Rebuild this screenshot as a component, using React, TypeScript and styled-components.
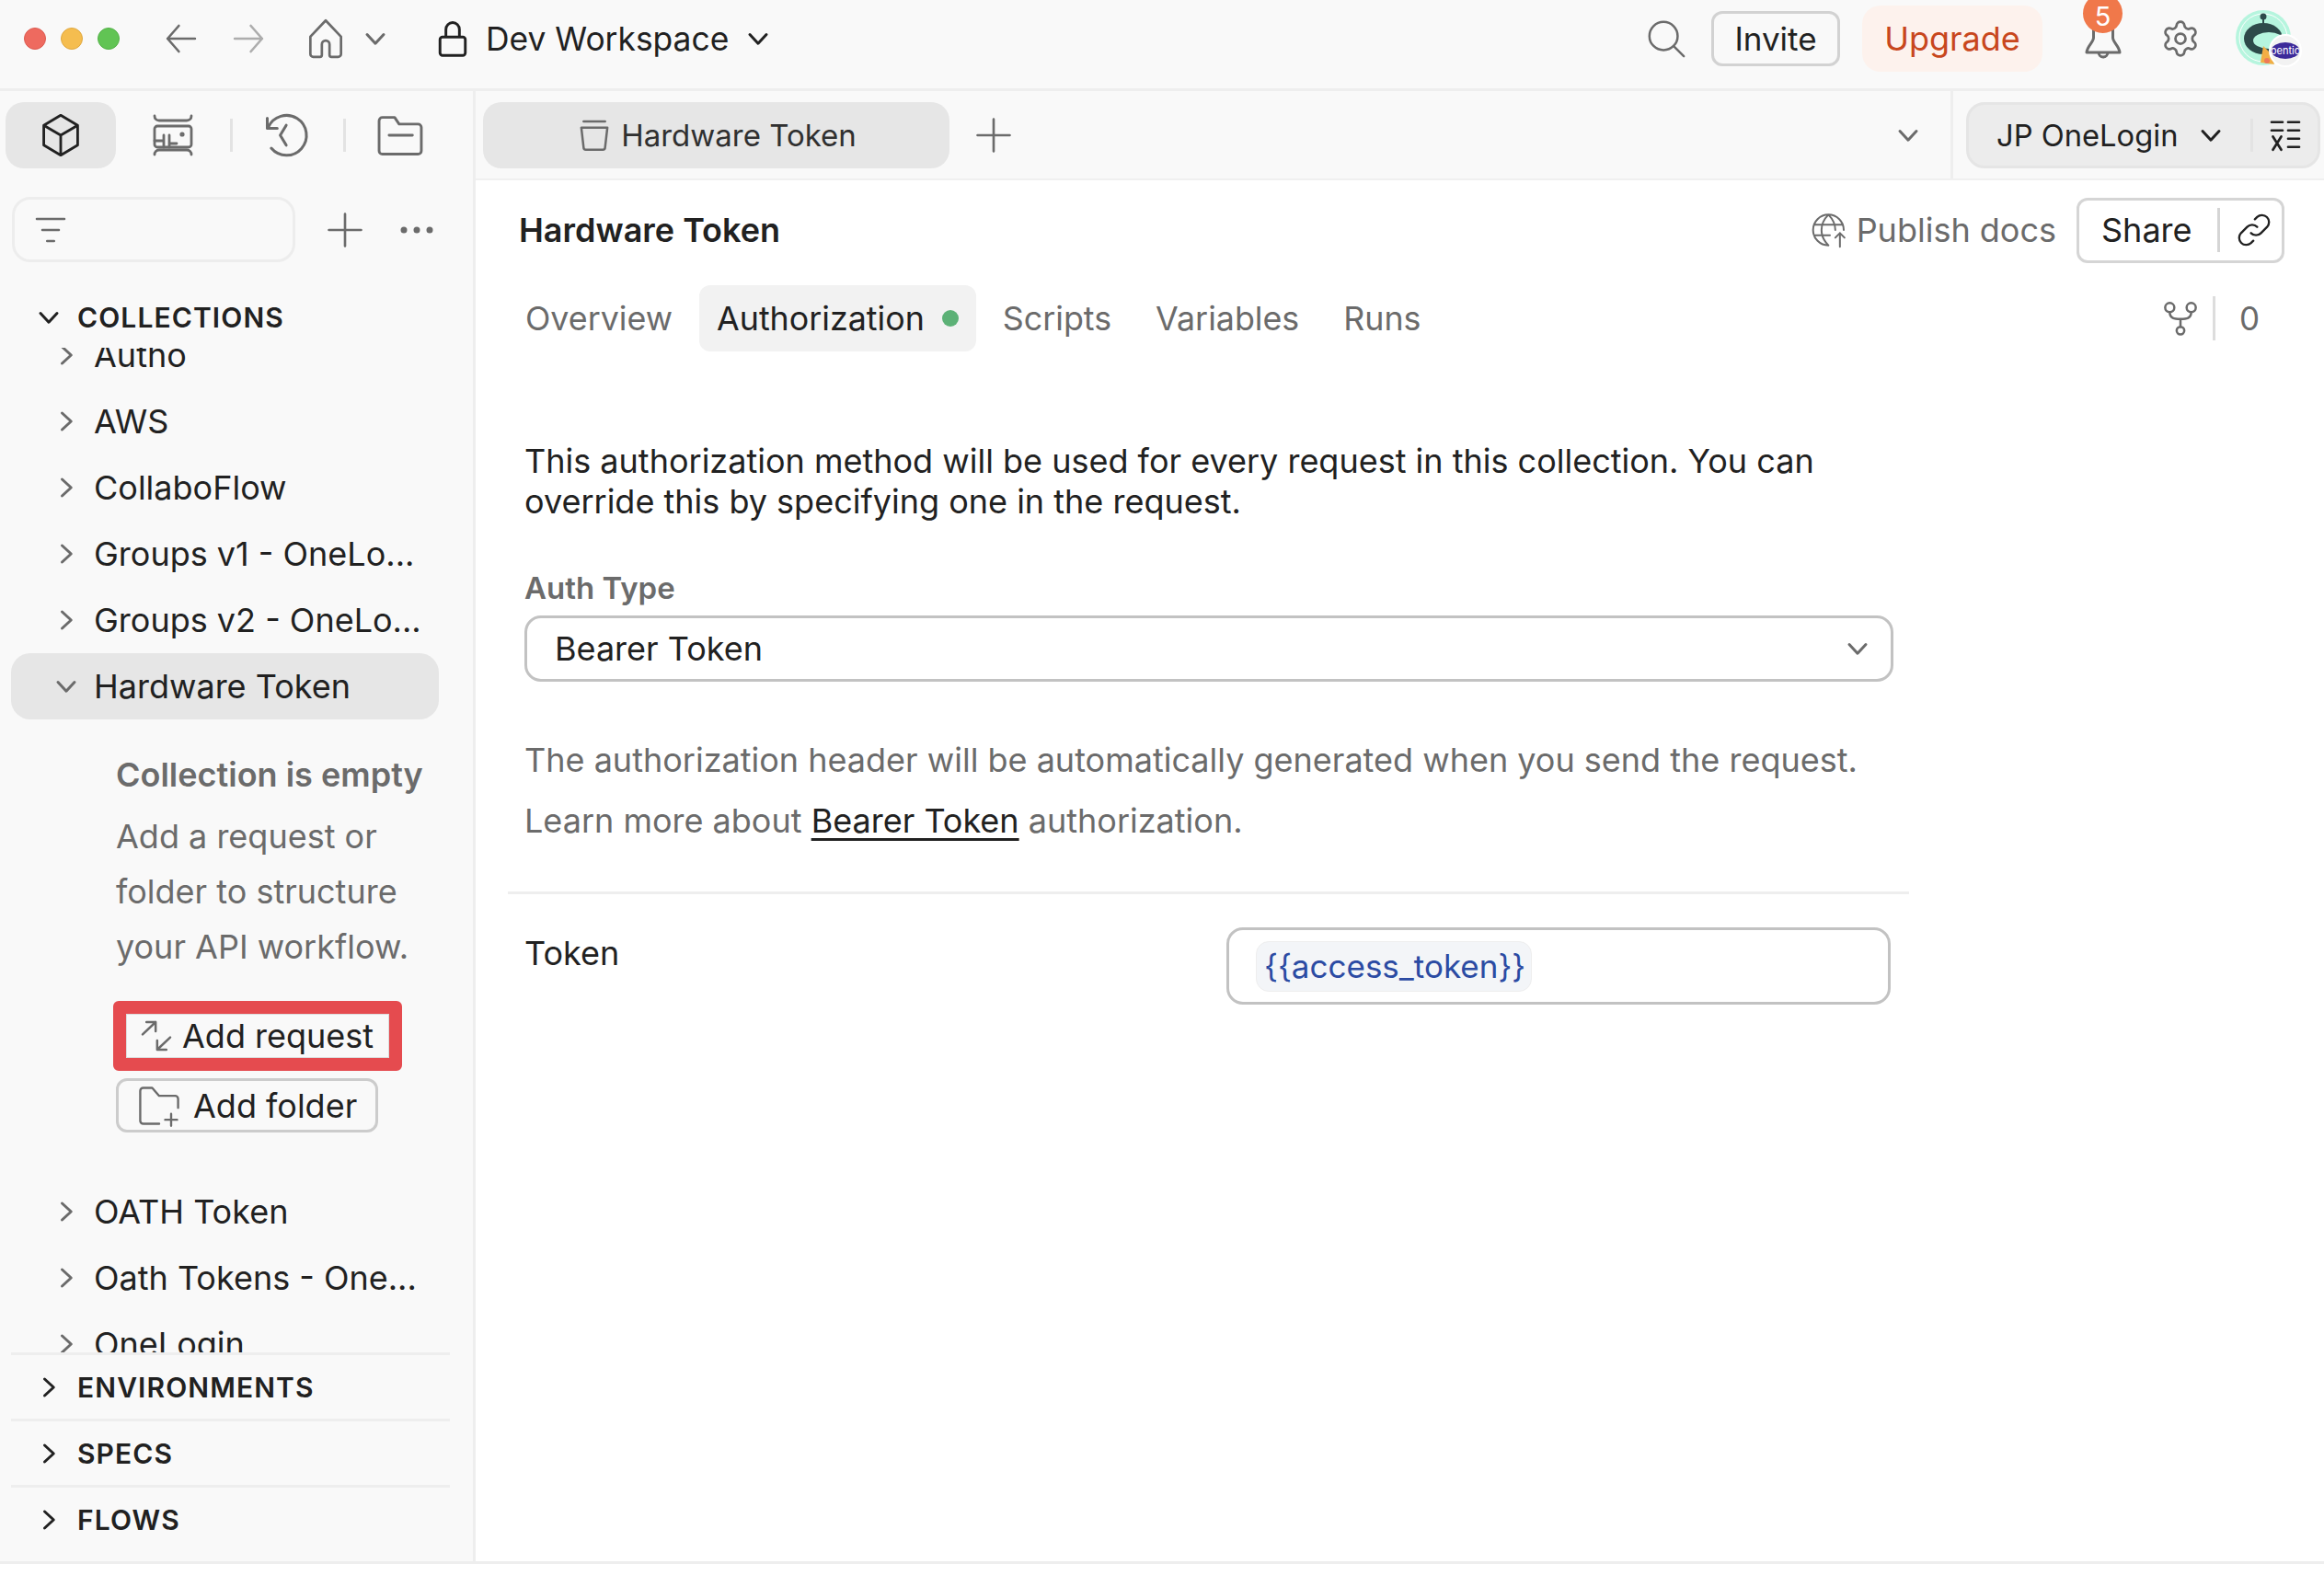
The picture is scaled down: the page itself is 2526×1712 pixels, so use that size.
import styled, { createGlobalStyle } from "styled-components";
import { ReactNode } from "react";
import { Settings } from "lucide-react";

const Global = createGlobalStyle`
    html, body {
        margin: 0;
        padding: 0;
        background: #ffffff;
    }
    * {
        box-sizing: border-box;
    }
`

const Page = styled.div`
    width: 2526px;
    height: 1712px;
    display: flex;
    flex-direction: column;
    overflow: hidden;
    background: #ffffff;
    font-family: Inter, "Liberation Sans", sans-serif;
    font-size: 35px;
    color: #212121;
`

const Svg = styled.svg<{ $tone?: string }>`
    display: block;
    flex: none;
    fill: none;
    stroke: ${(p) => p.$tone || "#6b6b6b"};
    stroke-linecap: round;
    stroke-linejoin: round;
`

type IconProps = { size: number; tone?: string; weight?: number; children: ReactNode }

function Icon({ size, tone, weight = 1.5, children }: IconProps) {
    return (
        <Svg $tone={tone} width={size} height={size} viewBox="0 0 24 24" strokeWidth={weight}>
            {children}
        </Svg>
    )
}

const ChevronDown = ({ tone }: { tone?: string }) => (
    <Icon size={36} tone={tone} weight={2}><path d="M6 9l6 6.500 6-6.500" /></Icon>
)
const ChevronRight = ({ tone }: { tone?: string }) => (
    <Icon size={36} tone={tone} weight={2}><path d="M9 6l6.500 6-6.500 6" /></Icon>
)

/* top bar */
const TopBar = styled.header`
    height: 99px;
    flex: none;
    display: flex;
    align-items: center;
    background: #f9f9f9;
    border-bottom: 3px solid #eeeeee;
    padding: 0 14px 12px 26px;
`
const Light = styled.span<{ $color: string; $edge: string }>`
    width: 24px;
    height: 24px;
    border-radius: 50%;
    margin-right: 16px;
    background: ${(p) => p.$color};
    border: 1px solid ${(p) => p.$edge};
`
const NavSlot = styled.span<{ $width: number; $left?: number }>`
    width: ${(p) => p.$width}px;
    margin-left: ${(p) => p.$left || 0}px;
    flex: none;
    display: flex;
    align-items: center;
    justify-content: center;
`
const Workspace = styled.span`
    display: flex;
    align-items: center;
    gap: 14px;
    margin-left: 44px;
    font-size: 35.400px;
    color: #212121;
`
const TopRight = styled.div`
    margin-left: auto;
    display: flex;
    align-items: center;
`
const InviteButton = styled.span`
    width: 140px;
    height: 60px;
    margin-left: 26px;
    display: flex;
    align-items: center;
    justify-content: center;
    border: 3px solid #d2d2d2;
    border-radius: 12px;
    font-size: 35px;
`
const UpgradeButton = styled.span`
    width: 196px;
    height: 72px;
    margin-left: 24px;
    display: flex;
    align-items: center;
    justify-content: center;
    background: #fdf2ed;
    border-radius: 20px;
    color: #c8471d;
    font-size: 36px;
`
const BellWrap = styled.span`
    position: relative;
    width: 60px;
    height: 48px;
    margin-left: 36px;
    display: flex;
    justify-content: center;
`
const Badge = styled.span`
    position: absolute;
    left: 8px;
    top: -18px;
    width: 43px;
    height: 35px;
    isolation: isolate;
    color: #ffffff;
    font-size: 29px;
    line-height: 35px;
    text-align: center;
    &::before {
        content: "";
        position: absolute;
        z-index: -1;
        left: 0;
        top: -7px;
        width: 43px;
        height: 43px;
        border-radius: 50%;
        background: #f0784a;
    }
`

/* page body */
const Body = styled.div`
    height: 1601px;
    flex: none;
    display: flex;
    border-bottom: 3px solid #eeeeee;
`

/* sidebar */
const Sidebar = styled.aside`
    width: 517px;
    flex: none;
    display: flex;
    flex-direction: column;
    background: #f9f9f9;
    border-right: 3px solid #eeeeee;
`
const SideTabs = styled.div`
    display: flex;
    align-items: center;
    height: 96px;
    padding-left: 6px;
`
const SideTab = styled.span<{ $width: number; $active?: boolean; $inset?: number }>`
    width: ${(p) => p.$width}px;
    height: 72px;
    padding-right: ${(p) => p.$inset || 0}px;
    display: flex;
    align-items: center;
    justify-content: center;
    border-radius: 20px;
    background: ${(p) => (p.$active ? "#e6e6e6" : "transparent")};
`
const SideDivider = styled.span`
    width: 3px;
    height: 36px;
    flex: none;
    background: #e3e3e3;
`
const SearchRow = styled.div`
    display: flex;
    align-items: center;
    height: 71px;
    margin-top: 19px;
    padding-left: 13px;
`
const FilterBox = styled.div`
    width: 308px;
    height: 71px;
    flex: none;
    display: flex;
    align-items: center;
    padding-left: 21px;
    border: 3px solid #ededed;
    border-radius: 20px;
`
const SectionHead = styled.div<{ $rule?: boolean; $top?: number }>`
    height: ${(p) => (p.$rule ? "72px" : "66px")};
    margin: ${(p) => p.$top || 0}px 25px 0 12px;
    padding-left: 23px;
    display: flex;
    align-items: center;
    gap: 13px;
    font-size: 30px;
    font-weight: 600;
    letter-spacing: 1.100px;
    color: #212121;
    border-top: ${(p) => (p.$rule ? "3px solid #eeeeee" : "none")};
`
const CollectionScroll = styled.div`
    height: 1092px;
    flex: none;
    overflow: hidden;
`
const CollectionList = styled.div`
    margin-top: -28px;
`
const TreeRow = styled.div<{ $active?: boolean }>`
    height: 72px;
    margin: 0 37px 0 12px;
    padding-left: 42px;
    display: flex;
    align-items: center;
    gap: 12px;
    border-radius: 21px;
    background: ${(p) => (p.$active ? "#e6e6e6" : "transparent")};
    font-size: 36px;
    white-space: nowrap;
`
const EmptyState = styled.div`
    padding: 30px 0 0 126px;
    height: 499px;
    display: flex;
    flex-direction: column;
    align-items: flex-start;
`
const EmptyTitle = styled.div`
    margin-bottom: 7px;
    font-size: 36px;
    font-weight: 600;
    line-height: 60px;
    color: #6b6b6b;
`
const EmptyText = styled.div`
    font-size: 36px;
    line-height: 60px;
    color: #6b6b6b;
`
const HighlightedAction = styled.div`
    margin: 29px 0 0 -3px;
    width: 314px;
    height: 76px;
    display: flex;
    align-items: center;
    gap: 8px;
    padding-left: 13px;
    background: #f9f9f9;
    border: 14px solid #e54b4f;
    border-radius: 6px;
    box-shadow: inset 0 0 0 1px #dddddd;
    font-size: 36px;
    color: #212121;
`
const FolderAction = styled.div`
    margin-top: 8px;
    width: 285px;
    height: 59px;
    display: flex;
    align-items: center;
    gap: 11px;
    padding-left: 18px;
    border: 3px solid #cccccc;
    border-radius: 12px;
    font-size: 36px;
    color: #212121;
`

/* main area */
const Main = styled.main`
    flex: 1;
    min-width: 0;
    display: flex;
    flex-direction: column;
`
const TabStrip = styled.div`
    height: 97px;
    flex: none;
    display: flex;
    align-items: center;
    padding-left: 8px;
    background: #f9f9f9;
    border-bottom: 2px solid #f0f0f0;
`
const OpenTab = styled.div`
    width: 507px;
    height: 72px;
    display: flex;
    align-items: center;
    justify-content: center;
    gap: 9px;
    background: #e6e6e6;
    border-radius: 20px;
    font-size: 33px;
    color: #303030;
`
const StripEnd = styled.div`
    margin-left: auto;
    height: 100%;
    display: flex;
    align-items: center;
`
const EnvSwitch = styled.div`
    width: 385px;
    height: 72px;
    margin: 0 4px 0 14px;
    display: flex;
    align-items: center;
    padding-left: 30px;
    background: #ececec;
    border: 3px solid #e5e5e5;
    border-radius: 20px;
    font-size: 32.700px;
    color: #212121;
`
const StripRule = styled.span`
    width: 3px;
    height: 100%;
    background: #eeeeee;
`
const InnerRule = styled.span`
    width: 3px;
    height: 36px;
    margin: 0 17px 0 25px;
    background: #e3e3e3;
`
const TitleRow = styled.div`
    height: 96px;
    margin-top: 6px;
    flex: none;
    display: flex;
    align-items: center;
    padding: 0 43px 0 47px;
`
const Title = styled.h1`
    margin: 0;
    font-size: 36px;
    font-weight: 600;
    color: #212121;
`
const Publish = styled.span`
    margin-left: auto;
    display: flex;
    align-items: center;
    gap: 9px;
    color: #6b6b6b;
    font-size: 36px;
`
const ShareButton = styled.div`
    width: 226px;
    height: 71px;
    margin-left: 22px;
    display: flex;
    align-items: center;
    background: #ffffff;
    border: 3px solid #d5d5d5;
    border-radius: 12px;
    font-size: 36px;
    padding-left: 24px;
`
const ShareRule = styled.span`
    width: 3px;
    height: 48px;
    margin: 0 17px 0 27px;
    background: #d5d5d5;
`
const TabsRow = styled.nav`
    height: 72px;
    flex: none;
    margin-top: 12px;
    display: flex;
    align-items: center;
    padding: 0 70px 0 35px;
`
const TabLabel = styled.span<{ $active?: boolean }>`
    height: 72px;
    display: flex;
    align-items: center;
    gap: 19px;
    padding: 0 19px;
    margin-right: 10px;
    border-radius: 12px;
    background: ${(p) => (p.$active ? "#f2f2f2" : "transparent")};
    color: ${(p) => (p.$active ? "#212121" : "#6b6b6b")};
    font-size: 35.800px;
`
const Dot = styled.span`
    width: 18px;
    height: 18px;
    border-radius: 50%;
    background: #5cb176;
`
const ForkCount = styled.div`
    margin-left: auto;
    display: flex;
    align-items: center;
    color: #6b6b6b;
    font-size: 35px;
`
const ForkRule = styled.span`
    width: 3px;
    height: 48px;
    margin: 0 26px 0 15px;
    background: #dddddd;
`
const Content = styled.section`
    padding: 97px 0 0 53px;
    width: 1558px;
    display: flex;
    flex-direction: column;
`
const Intro = styled.p`
    margin: 0;
    width: 1440px;
    font-size: 36px;
    line-height: 44px;
    color: #212121;
`
const FieldLabel = styled.div`
    margin-top: 50px;
    font-size: 33px;
    font-weight: 600;
    line-height: 44px;
    color: #6b6b6b;
`
const SelectBox = styled.div`
    margin-top: 8px;
    width: 1488px;
    height: 72px;
    flex: none;
    display: flex;
    align-items: center;
    justify-content: space-between;
    padding: 0 18px 0 30px;
    border: 3px solid #c2c2c2;
    border-radius: 18px;
    font-size: 36px;
`
const Help = styled.p`
    margin: 0;
    font-size: 36px;
    line-height: 66px;
    color: #6b6b6b;
`
const HelpBlock = styled.div`
    margin-top: 52px;
`
const DocLink = styled.a`
    color: #212121;
    text-decoration: underline;
    text-underline-offset: 6px;
    text-decoration-thickness: 3px;
`
const Rule = styled.hr`
    width: 1523px;
    height: 3px;
    margin: 44px 0 0 -18px;
    border: 0;
    background: #eeeeee;
`
const TokenRow = styled.div`
    margin-top: 36px;
    display: flex;
    justify-content: space-between;
    width: 1485px;
`
const TokenLabel = styled.span`
    font-size: 36px;
    line-height: 56px;
`
const TokenInput = styled.div`
    width: 722px;
    height: 84px;
    display: flex;
    align-items: center;
    padding-left: 29px;
    border: 3px solid #c2c2c2;
    border-radius: 18px;
`
const VarChip = styled.span`
    height: 55px;
    display: flex;
    align-items: center;
    padding: 0 6px 0 8px;
    border: 1px solid #eeeeee;
    border-radius: 14px;
    background: #f3f5f8;
    color: #2b4ba3;
    font-size: 35px;
`

const collectionsTop = ["Autho", "AWS", "CollaboFlow", "Groups v1 - OneLo...", "Groups v2 - OneLo..."]
const collectionsEnd = ["OATH Token", "Oath Tokens - One...", "OneLogin"]

function Avatar() {
    return (
        <svg width="84" height="72" viewBox="0 0 84 72" style={{ display: "block", flex: "none" }}>
            <circle cx="32" cy="35" r="30" fill="#b6f5de" />
            <circle cx="32" cy="35" r="26" fill="none" stroke="#ffffff" strokeWidth="1" />
            <circle cx="32" cy="12" r="3.500" fill="#2d4a4a" />
            <rect x="31" y="13" width="2" height="8" fill="#2d4a4a" />
            <ellipse cx="32" cy="36" rx="21" ry="17" fill="#2d4a4a" />
            <ellipse cx="38" cy="38" rx="17" ry="9" fill="#b6f5de" />
            <path d="M32 44l-3 18 15 2-5-13Z" fill="#f2ae45" />
            <circle cx="36" cy="60" r="3" fill="#ee7a58" />
            <circle cx="56" cy="49" r="17" fill="#f2f2f2" stroke="#ffffff" strokeWidth="2" />
            <ellipse cx="56" cy="49" rx="15.500" ry="9" fill="#3c2a9a" />
            <text x="56" y="53" textAnchor="middle" fontSize="11" fill="#ffffff" fontFamily="Inter, sans-serif">pentio</text>
        </svg>
    )
}

export default function App() {
    return (
        <Page>
            <Global />
            <TopBar>
                <Light $color="#ee6a5f" $edge="#dc5a50" />
                <Light $color="#f5bd4f" $edge="#e0a83f" />
                <Light $color="#61c454" $edge="#52b146" />
                <NavSlot $width={72} $left={15}>
                    <Icon size={42}><path d="M10.500 4 3.500 12l7 8M3.500 12h17" /></Icon>
                </NavSlot>
                <NavSlot $width={72} $left={1}>
                    <Icon size={42} tone="#adadad"><path d="M13.500 4l7 8-7 8M20.500 12h-17" /></Icon>
                </NavSlot>
                <NavSlot $width={72} $left={12}>
                    <Icon size={50} weight={1.3}><path d="M12 2.500 4 11v9a1.500 1.500 0 0 0 1.500 1.500H9a1 1 0 0 0 1-1v-5.500a2 2 0 0 1 4 0V20.500a1 1 0 0 0 1 1h3.500A1.500 1.500 0 0 0 20 20v-9Z" /></Icon>
                </NavSlot>
                <ChevronDown />
                <Workspace>
                    <Icon size={44} tone="#212121" weight={1.6}><path d="M6 11h12a1.500 1.500 0 0 1 1.500 1.500v8A1.500 1.500 0 0 1 18 22H6a1.500 1.500 0 0 1-1.500-1.500v-8A1.500 1.500 0 0 1 6 11ZM8 11V6.500a4 4 0 0 1 8 0V11" /></Icon>
                    Dev Workspace
                    <ChevronDown tone="#212121" />
                </Workspace>
                <TopRight>
                    <Icon size={46} weight={1.3}><circle cx="10.500" cy="10.500" r="8" /><path d="m16.500 16.500 5.500 5.500" /></Icon>
                    <InviteButton>Invite</InviteButton>
                    <UpgradeButton>Upgrade</UpgradeButton>
                    <BellWrap>
                        <Icon size={48} weight={1.5}><path d="M6.750 4v7.500c0 2.500-3.500 4.500-3.750 8h18c-.25-3.500-3.750-5.500-3.750-8V4M9.500 19.500a2.500 2.500 0 0 0 5 0" /></Icon>
                        <Badge>5</Badge>
                    </BellWrap>
                    <NavSlot $width={60} $left={24}>
                        <Settings size={44} strokeWidth={1.5} color="#6b6b6b" />
                    </NavSlot>
                    <NavSlot $width={84} $left={28}>
                        <Avatar />
                    </NavSlot>
                </TopRight>
            </TopBar>
            <Body>
                <Sidebar>
                    <SideTabs>
                        <SideTab $width={120} $active>
                            <Icon size={52} tone="#212121" weight={1.3}><path d="M12 2 20.500 7v10L12 22l-8.500-5V7ZM3.500 7 12 12l8.500-5M12 12v10" /></Icon>
                        </SideTab>
                        <SideTab $width={124}>
                            <Icon size={48} weight={1.4}>
                                <path d="M2 1.500c0 1.500 1 2.500 2.500 2.500h15c1.500 0 2.500-1 2.500-2.500M2 22.500c0-1.500 1-2.500 2.500-2.500h15c1.500 0 2.500 1 2.500 2.500" />
                                <path d="M3.500 7h17a1.500 1.500 0 0 1 1.500 1.500v8.500a1.500 1.500 0 0 1-1.500 1.500h-17A1.500 1.500 0 0 1 2 17V8.500A1.500 1.500 0 0 1 3.500 7Z" />
                                <path d="M7 12v6.500M10 12v6.500M2 15h5M10 16.500h4" />
                                <circle cx="17" cy="11.500" r=".6" />
                            </Icon>
                        </SideTab>
                        <SideDivider />
                        <SideTab $width={120} $inset={6}>
                            <Icon size={52} weight={1.4}><path d="M3.500 8A10 10 0 1 1 5 18.500M3 3.500V8.500h5M12.500 7l-3 5 3 5" /></Icon>
                        </SideTab>
                        <SideDivider />
                        <SideTab $width={118}>
                            <Icon size={58} weight={1.2}><path d="M2.500 6.500V19a1.500 1.500 0 0 0 1.500 1.500h16a1.500 1.500 0 0 0 1.500-1.500V8.500A1.500 1.500 0 0 0 20 7h-8.500L9.500 4H4a1.500 1.500 0 0 0-1.500 1.500ZM7 12h10.500" /></Icon>
                        </SideTab>
                    </SideTabs>
                    <SearchRow>
                        <FilterBox>
                            <Icon size={36} weight={1.7}><path d="M2 4h20M6 12h12M9.500 20h5" /></Icon>
                        </FilterBox>
                        <NavSlot $width={66} $left={21}>
                            <Icon size={42}><path d="M12 2v20M2 12h20" /></Icon>
                        </NavSlot>
                        <NavSlot $width={48} $left={21}>
                            <svg width="38" height="10" viewBox="0 0 38 10" fill="#6b6b6b"><circle cx="5" cy="5" r="3.500" /><circle cx="19" cy="5" r="3.500" /><circle cx="33" cy="5" r="3.500" /></svg>
                        </NavSlot>
                    </SearchRow>
                    <SectionHead $top={27}>
                        <ChevronDown tone="#212121" />
                        COLLECTIONS
                    </SectionHead>
                    <CollectionScroll>
                        <CollectionList>
                            {collectionsTop.map((name) => (
                                <TreeRow key={name}><ChevronRight />{name}</TreeRow>
                            ))}
                            <TreeRow $active><ChevronDown />Hardware Token</TreeRow>
                            <EmptyState>
                                <EmptyTitle>Collection is empty</EmptyTitle>
                                <EmptyText>Add a request or</EmptyText>
                                <EmptyText>folder to structure</EmptyText>
                                <EmptyText>your API workflow.</EmptyText>
                                <HighlightedAction>
                                    <Icon size={40} weight={1.5}><path d="M3 11 11.500 3M5.500 3h6v6M21 13l-8.500 8M18.500 21h-6v-6" /></Icon>
                                    Add request
                                </HighlightedAction>
                                <FolderAction>
                                    <Icon size={52} weight={1.1}><path d="M12 21H4a1.500 1.500 0 0 1-1.500-1.500v-15A1.500 1.500 0 0 1 4 3h4.500l3.500 4h8a1.500 1.500 0 0 1 1.500 1.500V13M18 16v6M15 19h6" /></Icon>
                                    Add folder
                                </FolderAction>
                            </EmptyState>
                            {collectionsEnd.map((name) => (
                                <TreeRow key={name}><ChevronRight />{name}</TreeRow>
                            ))}
                        </CollectionList>
                    </CollectionScroll>
                    {["ENVIRONMENTS", "SPECS", "FLOWS"].map((name) => (
                        <SectionHead key={name} $rule>
                            <ChevronRight tone="#212121" />
                            {name}
                        </SectionHead>
                    ))}
                </Sidebar>
                <Main>
                    <TabStrip>
                        <OpenTab>
                            <Icon size={40}><path d="M5 3h14M3.500 7h17l-1.500 13a1.500 1.500 0 0 1-1.500 1.500h-11A1.500 1.500 0 0 1 5 20Z" /></Icon>
                            Hardware Token
                        </OpenTab>
                        <NavSlot $width={42} $left={27}>
                            <Icon size={42}><path d="M12 2v20M2 12h20" /></Icon>
                        </NavSlot>
                        <StripEnd>
                            <ChevronDown />
                            <NavSlot $width={28} />
                            <StripRule />
                            <EnvSwitch>
                                JP OneLogin
                                <NavSlot $width={36} $left={18}><ChevronDown tone="#212121" /></NavSlot>
                                <InnerRule />
                                <Icon size={36} tone="#212121" weight={1.8}><path d="M2 2.500h8M14 2.500h8M2 8.500h8M14 8.500h8M14 14.500h8M14 20.500h8M3 13l6 9.500M9 13l-6 9.500" /></Icon>
                            </EnvSwitch>
                        </StripEnd>
                    </TabStrip>
                    <TitleRow>
                        <Title>Hardware Token</Title>
                        <Publish>
                            <Icon size={40} weight={1.2}><path d="M11 22a10 10 0 1 1 10-10M2.500 8.500h18M2.500 15.500H12M11 2c-6 6-6 14 0 20M11 2c3 3 4.500 6 4.500 10M18.500 23v-9M15.500 17l3-3 3 3" /></Icon>
                            Publish docs
                        </Publish>
                        <ShareButton>
                            Share
                            <ShareRule />
                            <Icon size={40} tone="#212121" weight={1.4}><path d="M10 14a4.500 4.500 0 0 0 6.500 0l4-4A4.600 4.600 0 0 0 14 3.500l-1.500 1.500M14 10a4.500 4.500 0 0 0-6.500 0l-4 4a4.600 4.600 0 0 0 6.500 6.500l1.500-1.500" /></Icon>
                        </ShareButton>
                    </TitleRow>
                    <TabsRow>
                        <TabLabel>Overview</TabLabel>
                        <TabLabel $active>Authorization<Dot /></TabLabel>
                        <TabLabel>Scripts</TabLabel>
                        <TabLabel>Variables</TabLabel>
                        <TabLabel>Runs</TabLabel>
                        <ForkCount>
                            <Icon size={40} weight={1.5}><circle cx="5" cy="5" r="3" /><circle cx="19" cy="5" r="3" /><circle cx="12" cy="20" r="2.500" /><path d="M5 8c0 4 3 4.500 7 4.500S19 12 19 8M12 12.500V17.500" /></Icon>
                            <ForkRule />
                            0
                        </ForkCount>
                    </TabsRow>
                    <Content>
                        <Intro>This authorization method will be used for every request in this collection. You can override this by specifying one in the request.</Intro>
                        <FieldLabel>Auth Type</FieldLabel>
                        <SelectBox>
                            Bearer Token
                            <ChevronDown />
                        </SelectBox>
                        <HelpBlock>
                            <Help>The authorization header will be automatically generated when you send the request.</Help>
                            <Help>Learn more about <DocLink>Bearer Token</DocLink> authorization.</Help>
                        </HelpBlock>
                        <Rule />
                        <TokenRow>
                            <TokenLabel>Token</TokenLabel>
                            <TokenInput><VarChip>{"{{access_token}}"}</VarChip></TokenInput>
                        </TokenRow>
                    </Content>
                </Main>
            </Body>
        </Page>
    )
}
